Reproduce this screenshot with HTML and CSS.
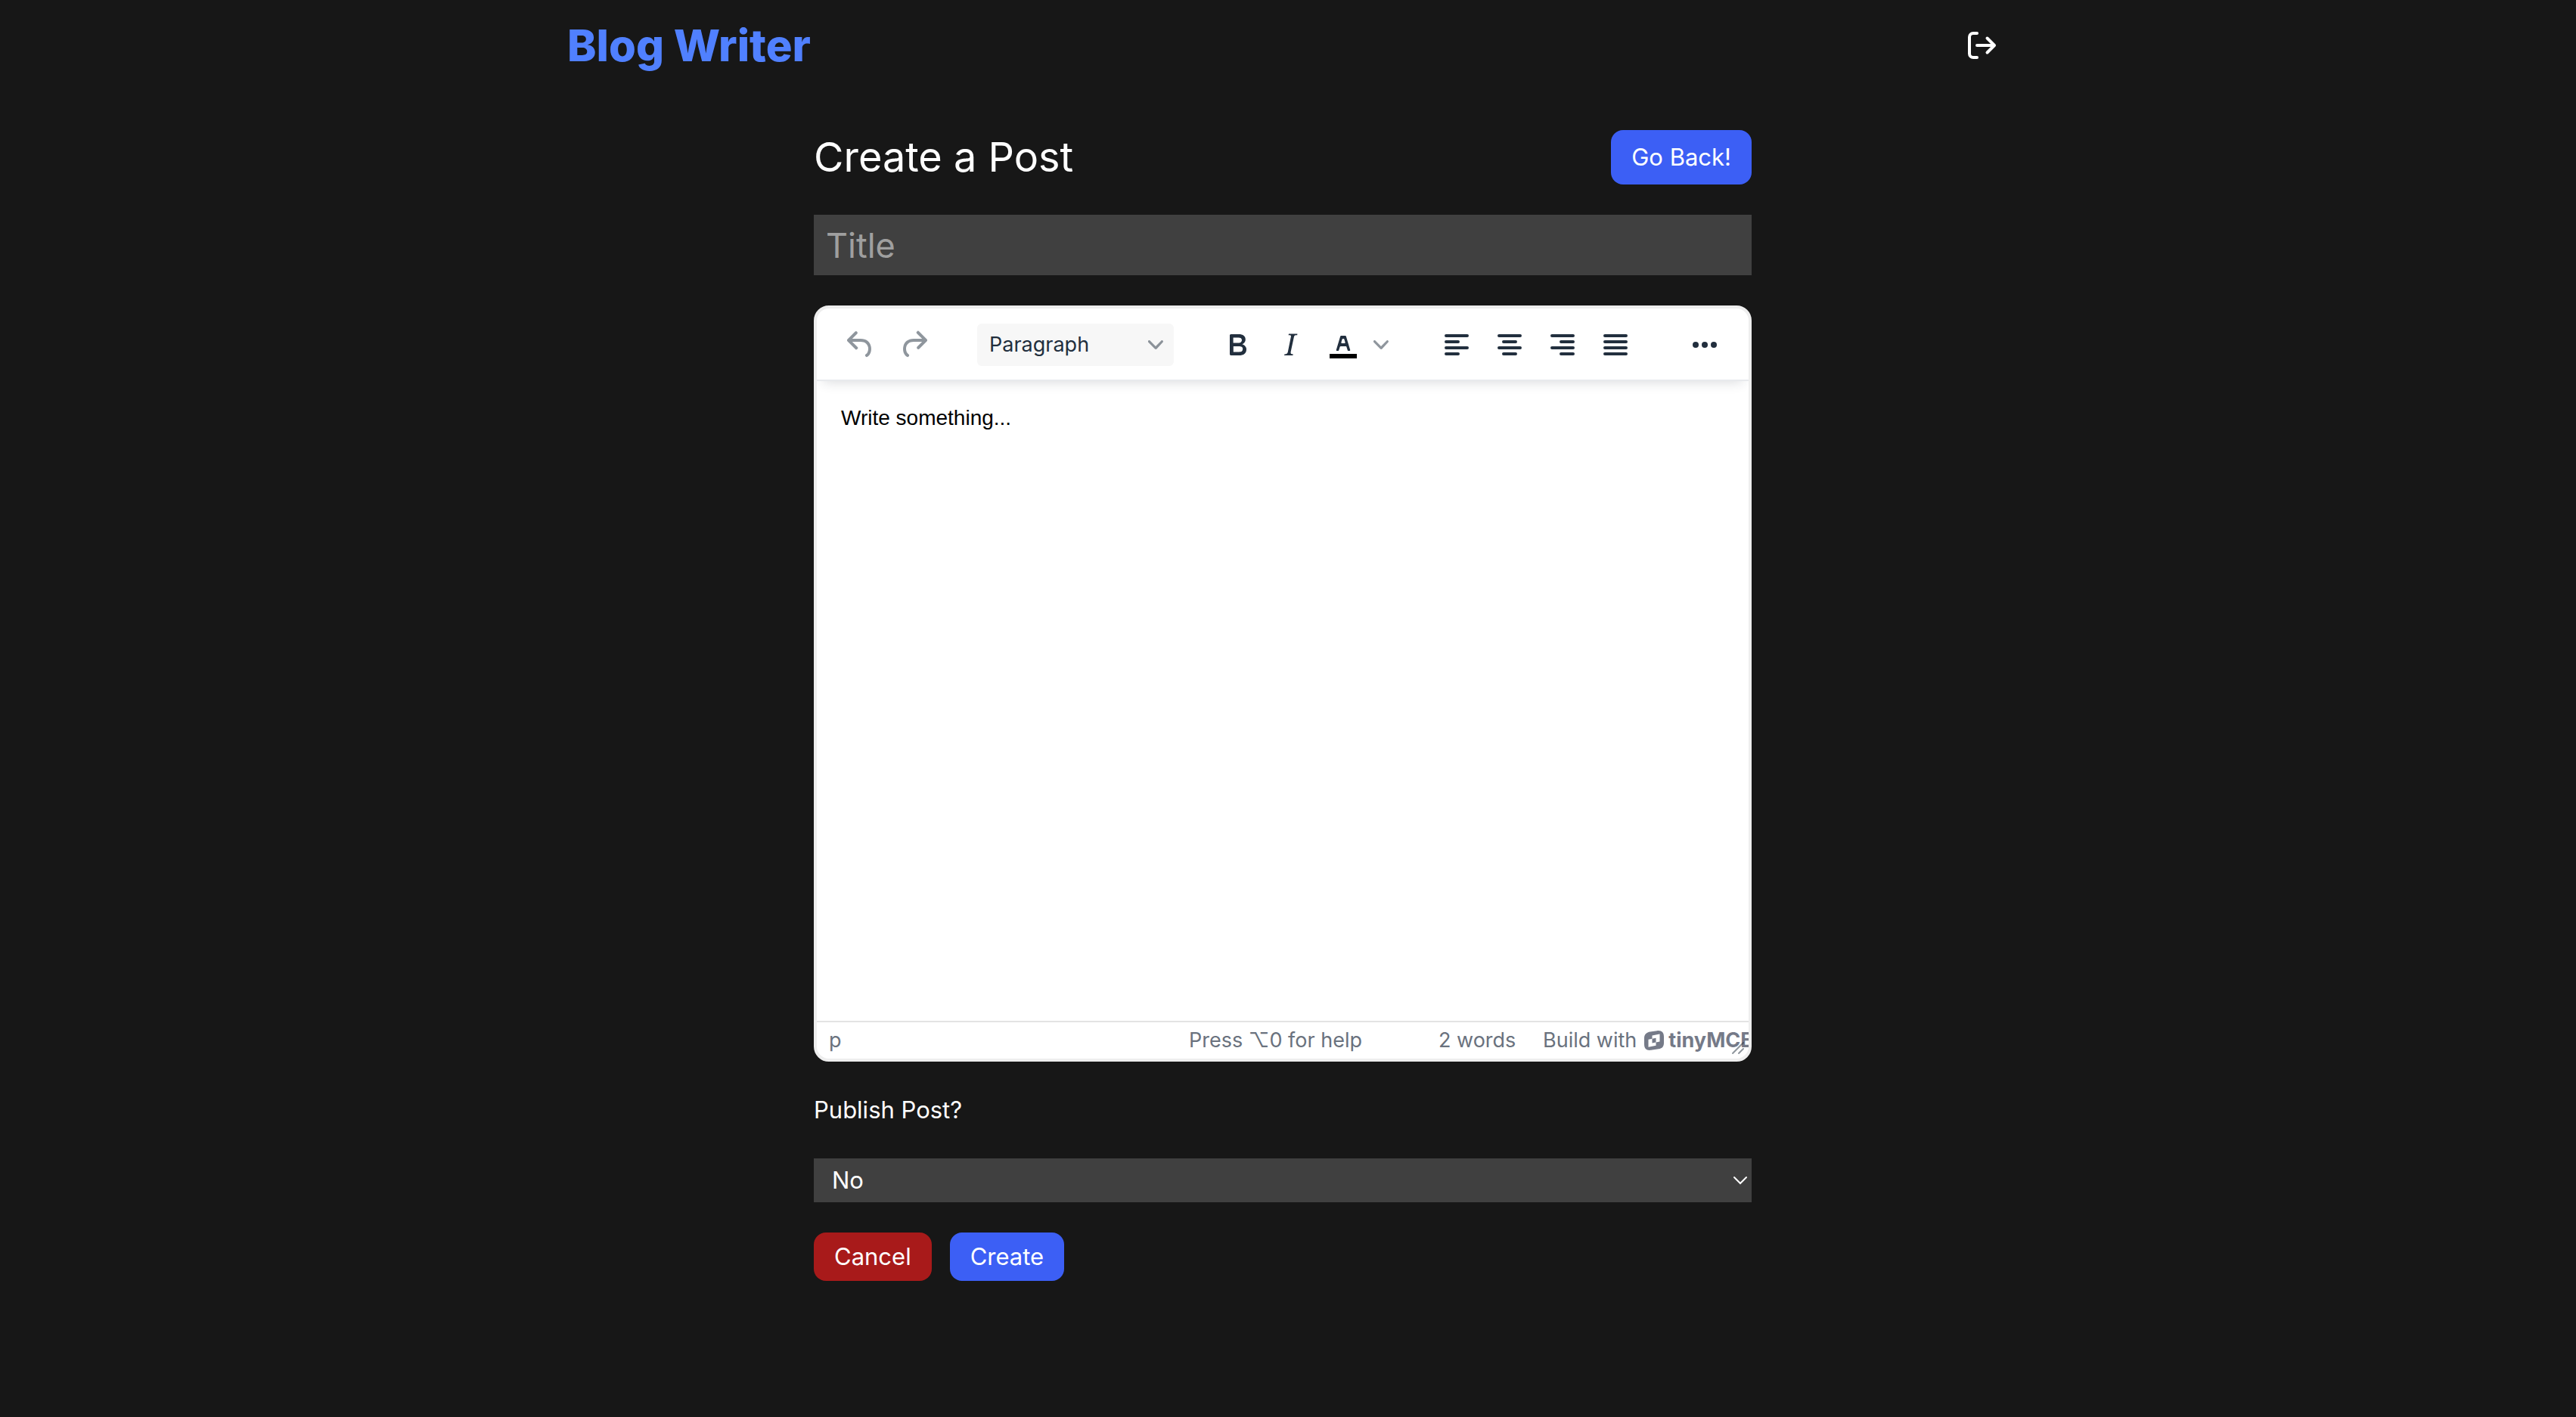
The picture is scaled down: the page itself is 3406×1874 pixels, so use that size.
FILE: index.html
```html
<!DOCTYPE html>
<html lang="en">
<head>
<meta charset="utf-8">
<meta name="viewport" content="width=device-width, initial-scale=1">
<title>Blog Writer</title>
<link rel="stylesheet" href="styles.css">
</head>
<body>
<header class="header">
  <a class="brand" href="#">Blog Writer</a>
  <button class="logout" type="button" aria-label="Log out">
    <svg viewBox="0 0 48 48" width="48" height="48" fill="none" stroke="currentColor" stroke-width="4" stroke-linecap="round" stroke-linejoin="round"><path d="M18 8H13a5 5 0 0 0-5 5v22a5 5 0 0 0 5 5h5M18 24H41M31.500 14.500L41 24l-9.500 9.500"/></svg>
  </button>
</header>
<main class="content">
  <div class="heading">
    <h1 class="page-title">Create a Post</h1>
    <button class="btn btn-primary btn-back" type="button">Go Back!</button>
  </div>
  <form class="post-form">
    <input class="title-input" type="text" placeholder="Title" aria-label="Title">
    <section class="editor" aria-label="Post body">
      <div class="toolbar" role="toolbar">
        <div class="group">
          <button class="tool muted" type="button" aria-label="Undo"><svg viewBox="0 0 24 24"><path d="M6.400 8H12c3.700 0 6.200 2 6.800 5.100.6 2.700-.4 5.600-2.300 6.800a1 1 0 0 1-1-1.800c1.100-.6 1.800-2.700 1.400-4.600-.5-2.100-2.100-3.500-4.900-3.500H6.400l3.300 3.300a1 1 0 1 1-1.400 1.400l-5-5a1 1 0 0 1 0-1.400l5-5a1 1 0 0 1 1.400 1.400L6.400 8Z"/></svg></button>
          <button class="tool muted" type="button" aria-label="Redo"><svg viewBox="0 0 24 24"><path d="M17.600 10H12c-2.800 0-4.400 1.400-4.900 3.500-.4 2 .3 4 1.400 4.600a1 1 0 1 1-1 1.800c-2-1.200-2.900-4.100-2.300-6.800.6-3 3-5.100 6.800-5.100h5.600l-3.300-3.300a1 1 0 1 1 1.400-1.400l5 5a1 1 0 0 1 0 1.400l-5 5a1 1 0 0 1-1.400-1.400l3.300-3.300Z"/></svg></button>
        </div>
        <button class="block-format" type="button">Paragraph
          <svg class="chevron" viewBox="0 0 10 10"><path d="M8.700 2.200c.3-.3.8-.3 1 0 .4.4.4.9 0 1.200L5.700 7.800c-.3.3-.9.3-1.200 0L.2 3.400a.8.8 0 0 1 0-1.200c.3-.3.8-.3 1.100 0L5 6l3.700-3.800Z"/></svg>
        </button>
        <div class="group">
          <button class="tool" type="button" aria-label="Bold"><svg viewBox="0 0 24 24"><path fill-rule="evenodd" d="M7.800 19c-.3 0-.5 0-.6-.2l-.2-.5V5.700c0-.2 0-.4.2-.5l.6-.2h5c1.500 0 2.700.3 3.500 1 .7.6 1.100 1.400 1.100 2.500a3 3 0 0 1-.6 1.900c-.4.6-1 1-1.600 1.200.4.1.9.3 1.300.6s.8.7 1 1.200c.4.4.5 1 .5 1.600 0 1.300-.4 2.300-1.300 3-.8.7-2.100 1-3.800 1H7.800Zm5-8.300c.6 0 1.200-.1 1.600-.5.4-.3.6-.7.6-1.300 0-1.100-.8-1.700-2.300-1.700H9.300v3.500h3.400Zm.5 6c.7 0 1.300-.1 1.700-.4.4-.4.6-.9.6-1.500s-.2-1-.7-1.400c-.4-.3-1-.4-2-.4H9.400v3.800h4Z"/></svg></button>
          <button class="tool" type="button" aria-label="Italic"><svg viewBox="0 0 24 24"><path d="m16.700 4.700-.1.9h-.3c-.6 0-1 0-1.400.3-.3.3-.4.6-.5 1.100l-2.100 9.800v.6c0 .5.4.8 1.400.8h.2l-.2.8H8l.2-.8h.2c1.100 0 1.800-.5 2-1.500l2-9.800.1-.5c0-.6-.4-.8-1.400-.8h-.3l.2-.9h5.800Z"/></svg></button>
          <button class="tool tool-split" type="button" aria-label="Text color">
            <svg viewBox="0 0 24 24"><path fill="#000" d="M3 18h18v3H3z"/><path fill-rule="evenodd" d="M8.700 16h-.8a.5.5 0 0 1-.5-.6l2.700-9c.1-.3.3-.4.5-.4h2.800c.2 0 .4.1.5.4l2.700 9a.5.5 0 0 1-.5.6h-.8a.5.5 0 0 1-.4-.4l-.7-2.200c0-.3-.3-.4-.5-.4h-3.400c-.2 0-.4.1-.5.4l-.7 2.200c0 .3-.2.4-.4.4Zm2.600-7.600-.6 2a.5.5 0 0 0 .5.6h1.600a.5.5 0 0 0 .5-.6l-.6-2c0-.3-.3-.4-.5-.4h-.4c-.2 0-.4.1-.5.4Z"/></svg>
            <svg class="chevron" viewBox="0 0 10 10"><path d="M8.700 2.200c.3-.3.8-.3 1 0 .4.4.4.9 0 1.200L5.700 7.800c-.3.3-.9.3-1.200 0L.2 3.400a.8.8 0 0 1 0-1.200c.3-.3.8-.3 1.100 0L5 6l3.700-3.800Z"/></svg>
          </button>
        </div>
        <div class="group">
          <button class="tool" type="button" aria-label="Align left"><svg class="lines" viewBox="0 0 24 24"><path d="M5 6h14M5 10h8M5 14h14M5 18h8"/></svg></button>
          <button class="tool" type="button" aria-label="Align center"><svg class="lines" viewBox="0 0 24 24"><path d="M5 6h14M8 10h8M5 14h14M8 18h8"/></svg></button>
          <button class="tool" type="button" aria-label="Align right"><svg class="lines" viewBox="0 0 24 24"><path d="M5 6h14M11 10h8M5 14h14M11 18h8"/></svg></button>
          <button class="tool" type="button" aria-label="Justify"><svg class="lines" viewBox="0 0 24 24"><path d="M5 6h14M5 10h14M5 14h14M5 18h14"/></svg></button>
        </div>
        <button class="tool" type="button" aria-label="More"><svg viewBox="0 0 24 24"><circle cx="6" cy="12" r="2"/><circle cx="12" cy="12" r="2"/><circle cx="18" cy="12" r="2"/></svg></button>
      </div>
      <div class="writing-area" contenteditable="true" role="textbox" aria-label="Body"><p class="paragraph">Write something...</p></div>
      <footer class="statusbar">
        <span class="path">p</span>
        <span class="help">Press ⌥0 for help</span>
        <span class="count">2 words</span>
        <a class="branding" href="#">Build with
          <svg class="mark" viewBox="0 0 26 26"><path fill-rule="evenodd" d="M8 1.500 17 .2C23-.5 26 2.500 26 8v8c0 5-2 7.500-7 8.300l-10 1.500C3 26.500 0 24 0 18v-8C0 5 3 2.200 8 1.500ZM10.500 6.500v4.200l-5 1v10l10-2v-4.200l5-1v-10Zm0 4.200 5-1v5.800l-5 1Z"/></svg><span class="wordmark">tinyMCE</span></a>
        <svg class="resize" viewBox="0 0 10 10"><path d="M1.500 8.500l7-7M5.500 8.500l3-3"/></svg>
      </footer>
    </section>
    <label class="publish-label" for="publish">Publish Post?</label>
    <div class="select-wrap">
      <select class="publish-select" id="publish"><option>No</option><option>Yes</option></select>
      <svg class="select-arrow" viewBox="0 0 20 12"><path d="M2 2l8 8 8-8"/></svg>
    </div>
    <div class="actions">
      <button class="btn btn-danger" type="button">Cancel</button>
      <button class="btn btn-primary" type="submit">Create</button>
    </div>
  </form>
</main>
</body>
</html>
```

FILE: styles.css
```css
*, *::before, *::after { box-sizing: border-box; }

body {
  margin: 0;
  padding-right: 14px;
  min-height: 100vh;
  background: #171717;
  color: #fff;
  font-family: Inter, "Liberation Sans", sans-serif;
  font-size: 31px;
  line-height: 48px;
}

button, input, select { font: inherit; color: inherit; border: 0; margin: 0; }
button { cursor: pointer; padding: 0; background: none; }
svg { display: block; flex: none; }

.header {
  display: flex;
  align-items: center;
  justify-content: space-between;
  max-width: 1920px;
  height: 120px;
  margin: 0 auto;
  padding: 0 12px 0 14px;
}
.brand {
  color: #5080ff;
  font-size: 58px;
  font-weight: 800;
  line-height: 72px;
  text-decoration: none;
}

.content { max-width: 1240px; margin: 0 auto; padding: 52px 0 180px; }
.heading {
  display: flex;
  align-items: center;
  justify-content: space-between;
  margin-bottom: 40px;
}
.page-title { margin: 0; font-size: 54px; font-weight: 400; line-height: 72px; }

.btn { height: 64px; padding: 0 27px; border-radius: 16px; }
.btn-primary { background: #3c5ff5; }
.btn-danger { background: #a81a1a; }
.btn-back { height: 72px; }

.title-input {
  display: block;
  width: 100%;
  height: 80px;
  padding: 0 16px;
  background: #404040;
  font-size: 45px;
}
.title-input::placeholder { color: #9f9f9f; opacity: 1; }

.editor {
  position: relative;
  display: flex;
  flex-direction: column;
  margin-top: 40px;
  border: 4px solid #eee;
  border-radius: 20px;
  overflow: hidden;
  background: #fff;
  color: #222f3e;
}
.toolbar {
  display: flex;
  gap: 50px;
  padding: 20px 24px 18px;
  border-bottom: 2px solid #e8eaed;
  box-shadow: 0 8px 16px -8px rgba(34, 47, 62, .2);
}
.group { display: flex; gap: 2px; }
.tool {
  display: flex;
  align-items: center;
  justify-content: center;
  width: 68px;
  height: 56px;
}
.tool svg { width: 48px; height: 48px; fill: #222f3e; }
.tool-split { justify-content: flex-start; gap: 16px; width: 100px; padding-left: 10px; }
.muted svg { opacity: .5; }
.tool .lines { fill: none; stroke: #222f3e; stroke-width: 2; stroke-linecap: round; }
.block-format {
  display: flex;
  align-items: center;
  justify-content: space-between;
  width: 260px;
  height: 56px;
  padding: 0 14px 0 16px;
  border-radius: 6px;
  background: #f7f7f7;
  font-size: 27px;
}
.chevron, .tool .chevron { width: 20px; height: 20px; fill: #222f3e; opacity: .5; }

.writing-area { height: 846px; padding: 28px 32px; outline: 0; color: #000; }
.paragraph {
  margin: 0;
  font-family: "Liberation Sans", Arial, sans-serif;
  font-size: 28px;
  line-height: 42px;
}

.statusbar {
  display: flex;
  align-items: center;
  height: 50px;
  padding-left: 16px;
  border-top: 2px solid #e3e3e3;
  color: #6a727e;
  font-size: 27px;
  line-height: 48px;
  white-space: nowrap;
}
.statusbar > * { flex: none; }
.path { width: 476px; }
.help { width: 330px; }
.count { width: 138px; }
.branding { display: flex; align-items: center; gap: 6px; color: inherit; text-decoration: none; }
.mark { width: 26px; height: 26px; margin-left: 4px; fill: #757a88; }
.wordmark { color: #757a88; font-weight: 700; }
.resize {
  position: absolute;
  right: 4px;
  bottom: 4px;
  width: 20px;
  height: 20px;
  fill: none;
  stroke: #222f3e;
  stroke-opacity: .5;
  stroke-linecap: round;
}

.publish-label { display: block; margin: 40px 0; }
.select-wrap { position: relative; }
.publish-select {
  display: block;
  appearance: none;
  width: 100%;
  height: 58px;
  padding: 0 24px;
  border-radius: 0;
  background: #404040;
}
.select-arrow {
  position: absolute;
  top: 23px;
  right: 5px;
  width: 20px;
  height: 12px;
  fill: none;
  stroke: #fff;
  stroke-width: 2;
  stroke-linecap: round;
  pointer-events: none;
}
.actions { display: flex; gap: 24px; margin-top: 40px; }
```
